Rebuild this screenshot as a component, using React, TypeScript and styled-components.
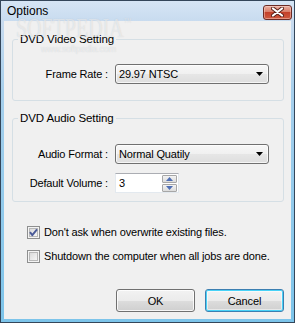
import styled, { createGlobalStyle } from 'styled-components';

const GlobalStyle = createGlobalStyle`
  html, body {
    margin: 0;
    padding: 0;
  }
  body {
    font-family: "Liberation Sans", Arial, sans-serif;
    font-size: 11px;
    letter-spacing: -0.15px;
    color: #000;
  }
  * {
    box-sizing: border-box;
  }
`;

const Window = styled.div`
  position: relative;
  width: 295px;
  height: 323px;
  border: 1px solid #34465a;
  background: linear-gradient(to bottom, #d6e5f5 0, #c8dbef 20px, #a6cfec 90px, #7cc4ea 100%);
  display: flex;
  flex-direction: column;
  padding: 0 3px 3px 3px;
  overflow: hidden;
`;

const TitleBar = styled.div`
  height: 20px;
  display: flex;
  align-items: center;
  justify-content: space-between;
  padding-left: 3px;
  font-size: 12px;
  letter-spacing: 0;
`;

const CloseButton = styled.div`
  width: 29px;
  height: 15px;
  margin-right: -1px;
  margin-top: 2px;
  border: 1px solid #6b2b25;
  border-radius: 3px;
  background: linear-gradient(to bottom, #eab0a2 0%, #d97d68 45%, #c4402a 50%, #cf5a40 100%);
  box-shadow: inset 0 0 0 1px rgba(255, 220, 210, 0.45);
  display: flex;
  align-items: center;
  justify-content: center;
`;

const Client = styled.div`
  flex: 1;
  background: #f0f0f0;
  display: flex;
  flex-direction: column;
  padding: 11px 7px 7px 8px;
`;

const Group = styled.fieldset<{ $pt: number; $pb: number; $mt?: number }>`
  margin: ${(p) => p.$mt ?? 0}px 0 0 0;
  border: 1px solid #d5dfe5;
  border-radius: 3px;
  padding: ${(p) => p.$pt}px 0 ${(p) => p.$pb}px 0;
  display: flex;
  flex-direction: column;
  gap: 9px;
  min-inline-size: 0;
`;

const Caption = styled.legend`
  margin-left: 5px;
  padding: 0 2px;
  line-height: 14px;
  font-size: 11.5px;
  letter-spacing: -0.1px;
`;

const Row = styled.div`
  display: grid;
  grid-template-columns: 95px auto;
  column-gap: 7px;
  align-items: center;
  justify-content: start;
`;

const Label = styled.span`
  text-align: right;
  white-space: nowrap;
`;

const Select = styled.div`
  width: 154px;
  height: 20px;
  border: 1px solid #707070;
  border-radius: 3px;
  background: linear-gradient(to bottom, #f7f7f7 0%, #f0f0f0 50%, #e6e6e6 51%, #dedede 100%);
  box-shadow: inset 0 0 0 1px rgba(255, 255, 255, 0.7);
  display: flex;
  align-items: center;
  justify-content: space-between;
  padding: 0 5px 0 3px;
`;

const SpinBox = styled.div`
  width: 64px;
  height: 20px;
  border: 1px solid #e3e9ef;
  border-top-color: #abadb3;
  background: #fff;
  display: flex;
  align-items: center;
  justify-content: space-between;
  padding: 1px 1px 1px 3px;
`;

const SpinButtons = styled.div`
  display: flex;
  flex-direction: column;
  gap: 1px;
`;

const SpinButton = styled.div`
  width: 15px;
  height: 8px;
  border: 1px solid #a7a7a7;
  border-radius: 1px;
  background: linear-gradient(to bottom, #f3f3f3, #dcdcdc);
  display: flex;
  align-items: center;
  justify-content: center;
`;

const Checks = styled.div`
  margin-top: 23px;
  display: flex;
  flex-direction: column;
  gap: 10px;
  padding-left: 15px;
`;

const CheckRow = styled.label`
  display: flex;
  align-items: center;
  gap: 4px;
  height: 14px;
  white-space: nowrap;
  svg {
    flex-shrink: 0;
  }
`;

const Buttons = styled.div`
  margin-top: auto;
  display: flex;
  justify-content: flex-end;
  gap: 10px;
`;

const Button = styled.div<{ $default?: boolean }>`
  width: 79px;
  height: 23px;
  border: 1px solid ${(p) => (p.$default ? '#3c7fb1' : '#707070')};
  border-radius: 3px;
  background: linear-gradient(to bottom, #f2f2f2 0%, #ebebeb 50%, #dddddd 51%, #cfcfcf 100%);
  box-shadow: ${(p) =>
    p.$default ? 'inset 0 0 0 1px #48d2f7, inset 0 0 0 2px rgba(255,255,255,0.5)' : 'inset 0 0 0 1px rgba(255,255,255,0.8)'};
  display: flex;
  align-items: center;
  justify-content: center;
`;

const Watermark = styled.div`
  position: absolute;
  left: 15px;
  top: 7px;
  pointer-events: none;
  color: rgba(255, 255, 255, 0.5);
  text-shadow: 0 0 1px rgba(120, 130, 140, 0.3);
`;

const WatermarkBig = styled.div`
  font-family: "Liberation Serif", serif;
  font-size: 27px;
  letter-spacing: 0;
  line-height: 28px;
  transform: scaleX(0.74);
  transform-origin: left top;
  white-space: nowrap;
  sup {
    font-size: 10px;
    vertical-align: 12px;
  }
`;

const WatermarkSmall = styled.div`
  font-size: 9px;
  margin: 2px 0 0 25px;
`;

function CheckBox({ checked }: { checked?: boolean }) {
  return (
    <svg width="13" height="13" viewBox="0 0 13 13">
      <defs>
        <linearGradient id="cbg" x1="0" y1="0" x2="1" y2="1">
          <stop offset="0" stopColor="#d9d9d9" />
          <stop offset="1" stopColor="#f8f8f8" />
        </linearGradient>
      </defs>
      <rect x="0.5" y="0.5" width="12" height="12" fill="#f4f4f4" stroke="#8e8f8f" />
      <rect x="2.5" y="2.5" width="8" height="8" fill="url(#cbg)" stroke="#b8b8b8" />
      {checked && (
        <path d="M3 6.2 L5.3 9.2 L10 3.3" fill="none" stroke="#4a5a98" strokeWidth="1.9" strokeLinejoin="round" />
      )}
    </svg>
  );
}

function DropArrow() {
  return (
    <svg width="7" height="4" viewBox="0 0 7 4">
      <path d="M0 0 H7 L3.5 4 Z" fill="#000" />
    </svg>
  );
}

function SpinArrow({ up }: { up?: boolean }) {
  return (
    <svg width="7" height="4" viewBox="0 0 7 4">
      <path d={up ? 'M0 4 H7 L3.5 0 Z' : 'M0 0 H7 L3.5 4 Z'} fill="#4f6fb4" />
    </svg>
  );
}

function App() {
  return (
    <>
      <GlobalStyle />
      <Window>
        <TitleBar>
          <span>Options</span>
          <CloseButton>
            <svg width="13" height="10" viewBox="0 0 13 10">
              <path d="M2 1.5 L11 8.5 M11 1.5 L2 8.5" stroke="#5a1f18" strokeWidth="4" strokeLinecap="round" />
              <path d="M2 1.5 L11 8.5 M11 1.5 L2 8.5" stroke="#fff" strokeWidth="2.2" strokeLinecap="round" />
            </svg>
          </CloseButton>
        </TitleBar>
        <Client>
          <Group $pt={18} $pb={16}>
            <Caption>DVD Video Setting</Caption>
            <Row>
              <Label>Frame Rate :</Label>
              <Select>
                <span>29.97 NTSC</span>
                <DropArrow />
              </Select>
            </Row>
          </Group>
          <Group $pt={19} $pb={8} $mt={10}>
            <Caption>DVD Audio Setting</Caption>
            <Row>
              <Label>Audio Format :</Label>
              <Select>
                <span>Normal Quatily</span>
                <DropArrow />
              </Select>
            </Row>
            <Row>
              <Label>Default Volume :</Label>
              <SpinBox>
                <span>3</span>
                <SpinButtons>
                  <SpinButton>
                    <SpinArrow up />
                  </SpinButton>
                  <SpinButton>
                    <SpinArrow />
                  </SpinButton>
                </SpinButtons>
              </SpinBox>
            </Row>
          </Group>
          <Checks>
            <CheckRow>
              <CheckBox checked />
              <span>Don't ask when overwrite existing files.</span>
            </CheckRow>
            <CheckRow>
              <CheckBox />
              <span>Shutdown the computer when all jobs are done.</span>
            </CheckRow>
          </Checks>
          <Buttons>
            <Button>OK</Button>
            <Button $default>Cancel</Button>
          </Buttons>
        </Client>
        <Watermark>
          <WatermarkBig>
            SOFTPEDIA<sup>™</sup>
          </WatermarkBig>
          <WatermarkSmall>www.softpedia.com</WatermarkSmall>
        </Watermark>
      </Window>
    </>
  );
}

export default App;
